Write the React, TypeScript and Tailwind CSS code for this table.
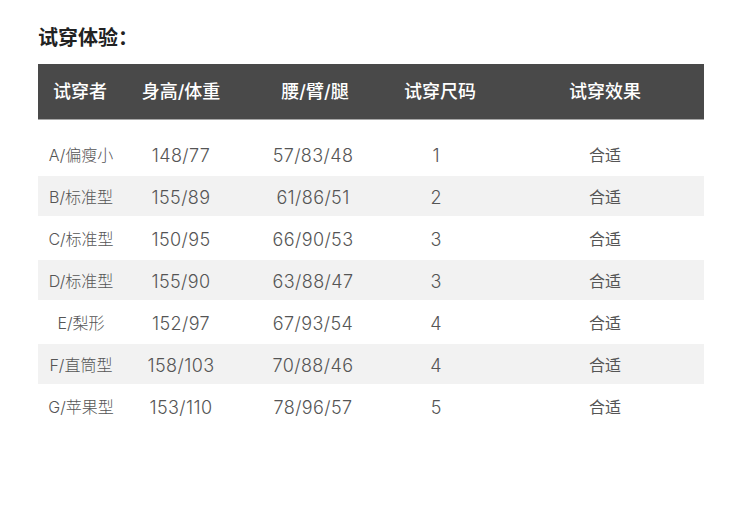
import React from 'react';

interface Row {
  name: string;
  hw: string;
  sizes: string;
  size: string;
  result: string;
}

const rows: Row[] = [
  { name: 'A/偏瘦小', hw: '148/77', sizes: '57/83/48', size: '1', result: '合适' },
  { name: 'B/标准型', hw: '155/89', sizes: '61/86/51', size: '2', result: '合适' },
  { name: 'C/标准型', hw: '150/95', sizes: '66/90/53', size: '3', result: '合适' },
  { name: 'D/标准型', hw: '155/90', sizes: '63/88/47', size: '3', result: '合适' },
  { name: 'E/梨形', hw: '152/97', sizes: '67/93/54', size: '4', result: '合适' },
  { name: 'F/直筒型', hw: '158/103', sizes: '70/88/46', size: '4', result: '合适' },
  { name: 'G/苹果型', hw: '153/110', sizes: '78/96/57', size: '5', result: '合适' },
];

const headers = ['试穿者', '身高/体重', '腰/臂/腿', '试穿尺码', '试穿效果'];

// fixed column template shared by header and body
const cols = 'grid grid-cols-[84px_118px_150px_116px_198px]';

const App: React.FC = () => {
  return (
    <div
      className="w-[750px] h-[526px] bg-white pt-[25px] px-[38px]"
      style={{ fontFamily: 'Inter, "Noto Sans CJK SC", "Noto Sans", sans-serif' }}
    >
      {/* Title */}
      <h2 className="text-[20px] leading-[26px] font-bold text-[#222]">试穿体验：</h2>

      {/* Table */}
      <div className="mt-[13px] w-[666px]">
        <div className={`${cols} h-[55px] items-center bg-[#494949] text-white text-[18px] font-medium shadow-[0_1px_0_#a8a8a8]`}>
          {headers.map((h, i) => (
            <div key={h} className={`text-center ${i === 3 ? 'pr-[16px]' : ''}`}>
              {h}
            </div>
          ))}
        </div>

        <div className="mt-[14px]">
          {rows.map((r, idx) => (
            <div
              key={r.name}
              className={`${cols} h-[42px] pt-[2px] items-center border-y border-white text-[#555] ${idx % 2 === 1 ? 'bg-[#f2f2f2]' : 'bg-white'}`}
            >
              <div className="text-center text-[16px] font-light pl-[2px]">{r.name}</div>
              <div className="text-center text-[18px] font-light tracking-[0.4px]">{r.hw}</div>
              <div className="text-center text-[18px] font-light tracking-[0.4px] pr-[4px]">{r.sizes}</div>
              <div className="text-center text-[18px] font-light pr-[24px]">{r.size}</div>
              <div className="text-center text-[16px]">{r.result}</div>
            </div>
          ))}
        </div>
      </div>
    </div>
  );
};

export default App;
